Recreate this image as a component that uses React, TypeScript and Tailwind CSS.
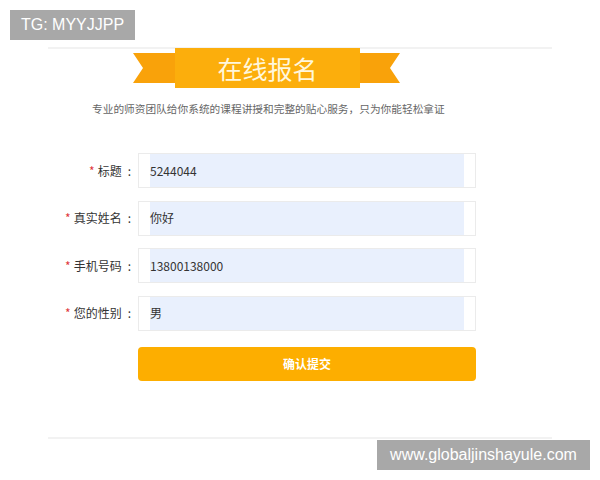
const fields = [
  { label: "标题", value: "5244044" },
  { label: "真实姓名", value: "你好" },
  { label: "手机号码", value: "13800138000" },
  { label: "您的性别", value: "男" },
];

function Ribbon() {
  return (
    <div className="ml-[85px] flex h-[40px] items-center">
      <svg width="42" height="30" viewBox="0 0 42 30" className="block">
        <polygon points="0,0 42,0 42,30 0,30 10,15" fill="#f9a20a" />
      </svg>
      <div className="flex h-[40px] w-[185px] items-center justify-center bg-[#fcae0c] text-[25px] leading-none text-[#fff7dc]">
        在线报名
      </div>
      <svg width="40" height="30" viewBox="0 0 40 30" className="block">
        <polygon points="0,0 40,0 30,15 40,30 0,30" fill="#f9a20a" />
      </svg>
    </div>
  );
}

export default function App() {
  return (
    <div className="relative h-[480px] w-[600px] overflow-hidden bg-white font-['Noto_Sans_CJK_SC','Liberation_Sans',sans-serif] text-[#333]">
      <div className="ml-[48px] w-[504px] pt-[47px]">
        <div className="h-[2px] bg-[#f2f2f2]" />
        <div className="-mt-[1px]">
          <Ribbon />
        </div>
        <p className="ml-[44px] mt-[14px] text-[10.7px] leading-[14px] text-[#666]">
          专业的师资团队给你系统的课程讲授和完整的贴心服务，只为你能轻松拿证
        </p>

        <div className="mt-[37px] flex flex-col gap-[12.5px]">
          {fields.map((f) => (
            <div key={f.label} className="flex items-center">
              <div className="flex w-[90px] items-center justify-end pr-[7px] text-[12px]">
                <span className="mr-[3px] text-[#e0393c]">*</span>
                <span>{f.label}</span>
                <span className="ml-[6px]">:</span>
              </div>
              <div className="flex h-[35px] w-[338px] border border-[#ebebeb] bg-white px-[11px]">
                <div className="flex flex-1 items-center bg-[#e9f0fd] text-[12px] text-[#333]">
                  {f.value}
                </div>
              </div>
            </div>
          ))}
        </div>

        <button className="ml-[90px] mt-[16px] flex h-[34px] w-[338px] items-center justify-center rounded-[4px] bg-[#fdae00] text-[12px] font-bold text-white">
          确认提交
        </button>

        <div className="mt-[56px] h-[2px] bg-[#f2f2f2]" />
      </div>

      <div className="absolute left-[10px] top-[10px] flex h-[30px] w-[125px] items-center justify-center bg-[#a8a8a8] font-['Liberation_Sans',sans-serif] text-[16px] text-white">
        TG: MYYJJPP
      </div>
      <div className="absolute left-[377px] top-[440px] flex h-[30px] w-[213px] items-center justify-center bg-[#a8a8a8] font-['Liberation_Sans',sans-serif] text-[16px] text-white">
        www.globaljinshayule.com
      </div>
    </div>
  );
}
